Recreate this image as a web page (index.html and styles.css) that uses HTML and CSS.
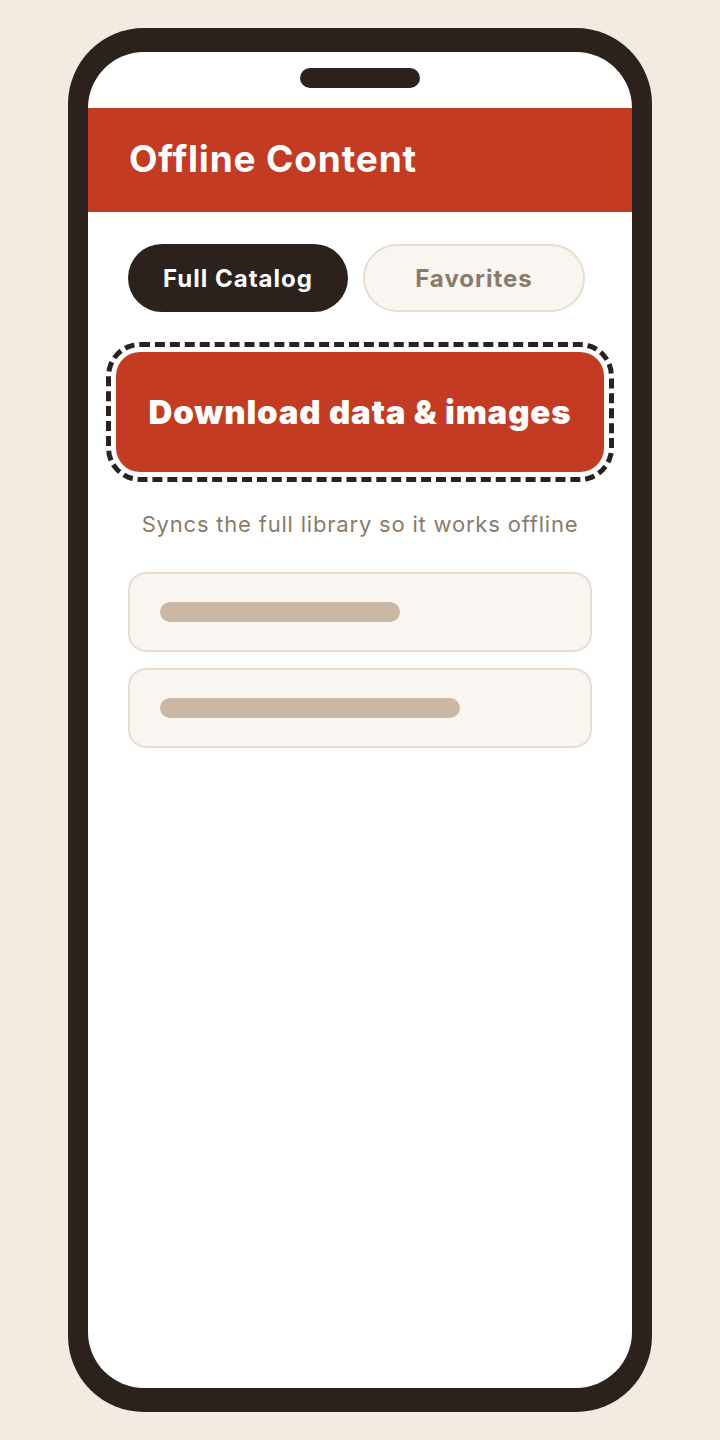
FILE: index.html
```html
<!DOCTYPE html>
<html lang="en">
<head>
<meta charset="utf-8">
<title>Offline Content</title>
<link rel="stylesheet" href="styles.css">
</head>
<body>
<div class="phone">
  <div class="screen">
    <div class="status">
      <div class="notch"></div>
    </div>
    <header class="appbar">
      <h1 class="title">Offline Content</h1>
    </header>
    <main class="content">
      <div class="tabs">
        <button class="tab tab-active">Full Catalog</button>
        <button class="tab tab-idle">Favorites</button>
      </div>
      <button class="download">Download data &amp; images</button>
      <p class="hint">Syncs the full library so it works offline</p>
      <div class="cards">
        <div class="card"><div class="bar bar-short"></div></div>
        <div class="card"><div class="bar bar-long"></div></div>
      </div>
    </main>
  </div>
</div>
</body>
</html>
```

FILE: styles.css
```css
* { box-sizing: border-box; }
html, body {
  margin: 0;
  padding: 0;
  background: #F3EBE2;
  font-family: Inter, "Noto Sans", "Liberation Sans", sans-serif;
}
body {
  padding-top: 28px;
  display: flex;
  justify-content: center;
  align-items: flex-start;
  height: 1440px;
}
.phone {
  width: 584px;
  height: 1384px;
  background: #2C221D;
  border-radius: 76px;
  padding: 24px 20px;
}
.screen {
  width: 100%;
  height: 100%;
  background: #FFFFFF;
  border-radius: 56px;
  overflow: hidden;
  display: flex;
  flex-direction: column;
}
.status {
  height: 56px;
  display: flex;
  justify-content: center;
  padding-top: 16px;
}
.notch {
  width: 120px;
  height: 20px;
  border-radius: 10px;
  background: #2C221D;
}
.appbar {
  height: 104px;
  background: #C23B22;
  display: flex;
  align-items: center;
  padding: 0 41px 4px;
}
.title {
  margin: 0;
  color: #FFFFFF;
  font-size: 37px;
  font-weight: 700;
  letter-spacing: 0.85px;
}
.content {
  padding: 32px 40px 0;
  display: flex;
  flex-direction: column;
}
.tabs {
  display: flex;
  gap: 15px;
}
.tab {
  width: 220px;
  height: 68px;
  border-radius: 34px;
  font-family: inherit;
  font-size: 24px;
  font-weight: 700;
  letter-spacing: 1px;
  padding: 0;
}
.tab-active {
  background: #2C221D;
  color: #FFFFFF;
  border: none;
}
.tab-idle {
  width: 222px;
  background: #F9F6F1;
  color: #8A7B6B;
  border: 2px solid #E8DDD0;
}
.download {
  margin: 40px -12px 0;
  height: 120px;
  border: none;
  border-radius: 24px;
  background: #C23B22;
  color: #FFFFFF;
  font-family: inherit;
  font-size: 33px;
  font-weight: 900;
  letter-spacing: 0.85px;
  outline: 5px dashed #2C221D;
  outline-offset: 5px;
}
.hint {
  margin: 36px 0 0;
  text-align: center;
  color: #8A7B6B;
  font-size: 22px;
  line-height: 32px;
  letter-spacing: 0.8px;
}
.cards {
  margin-top: 32px;
  display: flex;
  flex-direction: column;
  gap: 16px;
}
.card {
  height: 80px;
  background: #F9F6F1;
  border: 2px solid #E8DDD0;
  border-radius: 18px;
  padding: 0 30px;
  display: flex;
  align-items: center;
}
.bar {
  height: 20px;
  border-radius: 10px;
  background: #CBB8A4;
}
.bar-short { width: 240px; }
.bar-long { width: 300px; }
```
